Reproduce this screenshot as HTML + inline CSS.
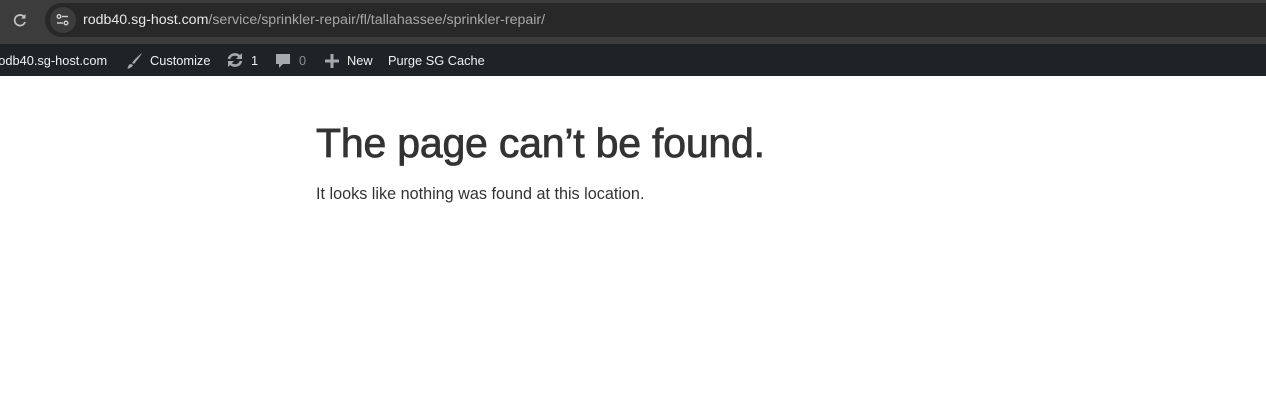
<!DOCTYPE html>
<html><head><meta charset="utf-8"><style>
*{margin:0;padding:0;box-sizing:border-box}
body{width:1266px;height:415px;overflow:hidden;background:#fff;font-family:"Liberation Sans",sans-serif;position:relative}
.top{position:absolute;left:0;top:0;width:1266px;height:44px;background:#3c3c3c}
.omni{position:absolute;left:45px;top:3px;width:1240px;height:34px;background:#282828;border-radius:17px}
.tune{position:absolute;left:50px;top:7px;width:26px;height:26px;border-radius:13px;background:#3c3c3c}
.url{position:absolute;left:83px;top:12px;font-size:14.2px;color:#a8a8a8;white-space:nowrap}
.url b{font-weight:normal;color:#e8e8e8}
.bar{position:absolute;left:0;top:44px;width:1266px;height:32px;background:#1d2327;color:#f0f0f1;font-size:12.8px}
.bar span{position:absolute;top:9px;white-space:nowrap}
h1{position:absolute;left:316px;top:120px;font-size:41px;font-weight:normal;color:#333;white-space:nowrap;letter-spacing:-0.2px;-webkit-text-stroke:0.8px #333}
p{position:absolute;left:316px;top:185px;font-size:16.2px;color:#333;white-space:nowrap}
</style></head><body>
<div class="top"></div>
<svg style="position:absolute;left:11px;top:11px" width="18" height="18" viewBox="0 0 18 18"><path d="M13.5 6.5A5.3 5.3 0 1 0 14 11" fill="none" stroke="#c4c4c4" stroke-width="1.7"/><path d="M14.5 3v4.5H10z" fill="#c4c4c4"/></svg>
<div class="omni"></div>
<div class="tune"></div>
<svg style="position:absolute;left:55px;top:12px" width="16" height="16" viewBox="0 0 16 16" fill="none" stroke="#d0d0d0" stroke-width="1.4"><circle cx="4" cy="4.5" r="1.8"/><path d="M7 4.5h6"/><circle cx="11" cy="11" r="1.8"/><path d="M2 11h6"/></svg>
<div class="url"><b>rodb40.sg-host.com</b>/service/sprinkler-repair/fl/tallahassee/sprinkler-repair/</div>
<div class="bar">
<span style="left:-6px">rodb40.sg-host.com</span>
<svg style="position:absolute;left:126px;top:8px" width="18" height="18" viewBox="0 0 18 18"><path d="M16 1 C12 4 8 8 6 11 L8 12 C10 9 14 5 16 1Z M5 12 C3 12 2 14 1.5 17 C4 16 6.5 15 7 13Z" fill="#a7aaad"/></svg>
<span style="left:150px">Customize</span>
<svg style="position:absolute;left:226px;top:8px" width="18" height="16" viewBox="0 0 18 16"><path d="M3 7a6 5.5 0 0 1 11-2M15 9a6 5.5 0 0 1-11 2" fill="none" stroke="#a7aaad" stroke-width="2.6"/><path d="M16 1v6h-6zM2 15V9h6z" fill="#a7aaad"/></svg>
<span style="left:251px">1</span>
<svg style="position:absolute;left:275px;top:9px" width="16" height="17" viewBox="0 0 16 17"><path d="M1 1h14v10H8l-4 4v-4H1z" fill="#a7aaad"/></svg>
<span style="left:299px;color:#8c8f94">0</span>
<svg style="position:absolute;left:325px;top:10px" width="14" height="14" viewBox="0 0 14 14"><path d="M7 0v14M0 7h14" stroke="#a7aaad" stroke-width="3"/></svg>
<span style="left:347px">New</span>
<span style="left:388px">Purge SG Cache</span>
</div>
<h1>The page can’t be found.</h1>
<p>It looks like nothing was found at this location.</p>
</body></html>
